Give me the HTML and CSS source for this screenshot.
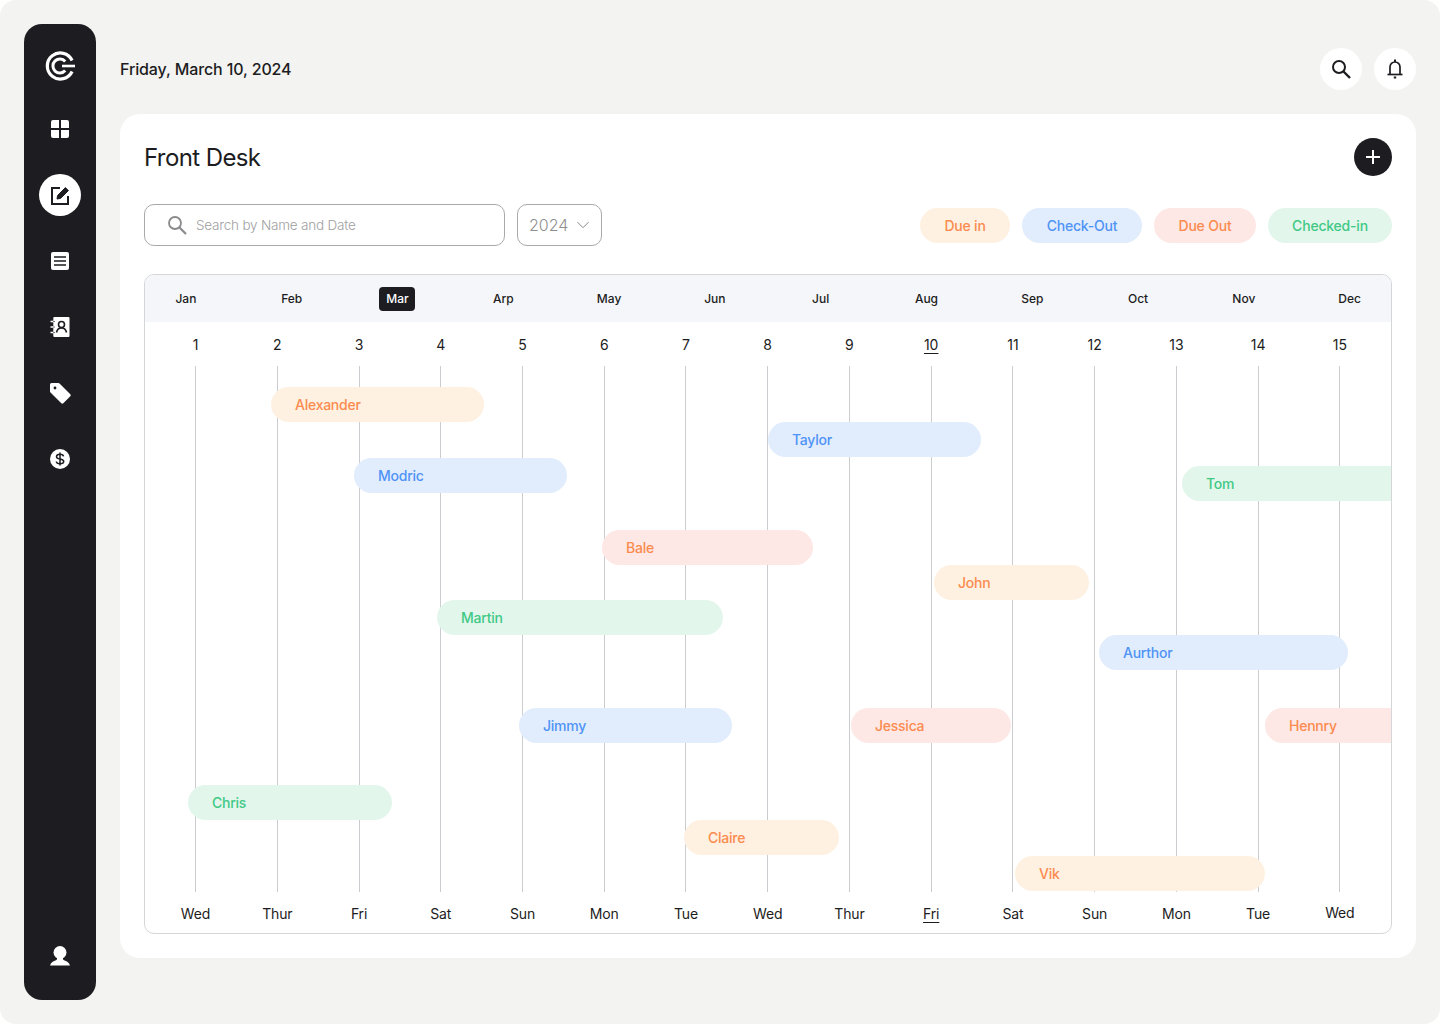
FILE: index.html
```html
<!DOCTYPE html>
<html lang="en">

<head>
  <meta charset="UTF-8" />
  <title>Front Desk</title>
  <link rel="stylesheet" href="styles.css">
</head>

<body>
  <div class="shell">
    <div class="sidebar">
      <svg class="logo" width="30" height="30" viewBox="0 0 30 30" fill="none" stroke="#fff" stroke-width="3.2">
        <path d="M27.100 9.500A13 13 0 1 0 27.100 20.500" />
        <path d="M20.200 10.400A7 7 0 1 0 20.200 19.600" stroke-width="3" />
        <path d="M17 15H30" stroke-width="2.600" />
      </svg>
      <div class="nav-item">
        <svg width="18" height="18" viewBox="0 0 18 18" fill="#fff">
          <path d="M2 0h6v8H0V2a2 2 0 0 1 2-2zM10 0h6a2 2 0 0 1 2 2v6h-8zM0 10h8v8H2a2 2 0 0 1-2-2zM10 10h8v6a2 2 0 0 1-2 2h-6z" />
        </svg>
      </div>
      <div class="nav-item active">
        <svg width="20" height="20" viewBox="0 0 20 20" fill="none" stroke="#1c1c21" stroke-width="2">
          <path d="M10 3H2v16h16v-8" />
          <path d="M7 14l.6-3.6L15.400 2.600l3 3-7.800 7.800z" fill="#1c1c21" stroke-width="1" />
        </svg>
      </div>
      <div class="nav-item">
        <svg width="18" height="18" viewBox="0 0 18 18">
          <rect width="18" height="18" rx="2" fill="#fff" />
          <path d="M3 5h12M3 9h12M3 13h12" stroke="#1c1c21" stroke-width="1.600" />
        </svg>
      </div>
      <div class="nav-item">
        <svg width="20" height="20" viewBox="0 0 20 20">
          <rect x="3.300" y="0" width="16.200" height="20" rx="1" fill="#fff" />
          <path d="M.5 4.500h4M.5 10h4M.5 15.500h4" stroke="#fff" stroke-width="1.600" />
          <path d="M3.300 4.500h1.500M3.300 10h1.500M3.300 15.500h1.500" stroke="#1c1c21" stroke-width="0.800" />
          <circle cx="11.500" cy="7.500" r="3" fill="none" stroke="#1c1c21" stroke-width="1.600" />
          <path d="M6.500 15.500c.5-3 2.500-4.500 5-4.500s4.500 1.500 5 4.500" fill="none" stroke="#1c1c21" stroke-width="1.600" />
        </svg>
      </div>
      <div class="nav-item">
        <svg width="21" height="21" viewBox="0 0 21 21">
          <path d="M1.500 0h7a1.500 1.500 0 0 1 1 .5l10.800 10.800a1.500 1.500 0 0 1 0 2l-7 7a1.500 1.500 0 0 1-2 0L.5 9.500a1.500 1.500 0 0 1-.5-1V1.500A1.500 1.500 0 0 1 1.500 0z" fill="#fff" />
          <circle cx="5" cy="5" r="1.400" fill="#1c1c21" />
        </svg>
      </div>
      <div class="nav-item">
        <svg width="20" height="20" viewBox="0 0 20 20" fill="none">
          <circle cx="10" cy="10" r="10" fill="#fff" />
          <path d="M13.500 7.300C13.300 6 12 5.300 10 5.300c-2.200 0-3.500 1-3.500 2.400 0 3.300 7.200 1.300 7.200 4.700 0 1.400-1.500 2.300-3.700 2.300-2.100 0-3.500-.8-3.700-2.200M10 3.500v13" stroke="#1c1c21" stroke-width="1.500" />
        </svg>
      </div>
      <div class="nav-user">
        <svg width="20" height="20" viewBox="0 0 20 20" fill="#fff">
          <circle cx="10" cy="6.500" r="6.500" />
          <path d="M0 19.500c.8-3 3.500-4.300 6-5.200 1.200-.5 1.200-2 .8-3.300h6.400c-.4 1.300-.4 2.800.8 3.300 2.500.9 5.200 2.200 6 5.200z" />
        </svg>
      </div>
    </div>

    <div class="main">
      <div class="topbar">
        <div class="date">Friday, March 10, 2024</div>
        <div class="top-actions">
          <div class="round-btn">
            <svg width="20" height="20" viewBox="0 0 20 20" fill="none" stroke="#1c1c21" stroke-width="2">
              <circle cx="8" cy="8" r="6" />
              <path d="M12.500 12.500L19 19" stroke-width="2.400" />
            </svg>
          </div>
          <div class="round-btn">
            <svg width="16" height="20" viewBox="0 0 16 20" fill="none" stroke="#1c1c21" stroke-width="1.700">
              <path d="M3 15V8a5 5 0 0 1 10 0v7" />
              <path d="M.5 15.500h15" />
              <path d="M8 0.500v2.500M6.800 18.500h2.400" stroke-width="2" />
            </svg>
          </div>
        </div>
      </div>

      <div class="card">
        <div class="card-head">
          <h1>Front Desk</h1>
          <div class="add-btn">
            <svg width="16" height="16" viewBox="0 0 16 16" stroke="#fff" stroke-width="2">
              <path d="M8 1v14M1 8h14" />
            </svg>
          </div>
        </div>

        <div class="controls">
          <div class="search">
            <svg width="20" height="20" viewBox="0 0 20 20" fill="none" stroke="#8a8a8c" stroke-width="1.800">
              <circle cx="8" cy="8" r="6" />
              <path d="M12.500 12.500L19 19" stroke-width="2.200" />
            </svg>
            <span>Search by Name and Date</span>
          </div>
          <div class="year">
            <span>2024</span>
            <svg width="14" height="8" viewBox="0 0 14 8" fill="none" stroke="#8a8a8c" stroke-width="1">
              <path d="M1.500 1.200l5.500 5.500 5.500-5.500" />
            </svg>
          </div>
          <div class="legend">
            <div class="pill orange">Due in</div>
            <div class="pill blue">Check-Out</div>
            <div class="pill pink">Due Out</div>
            <div class="pill green">Checked-in</div>
          </div>
        </div>

        <div class="board">
          <div class="months">
            <div>Jan</div>
            <div>Feb</div>
            <div><span class="current">Mar</span></div>
            <div>Arp</div>
            <div>May</div>
            <div>Jun</div>
            <div>Jul</div>
            <div>Aug</div>
            <div>Sep</div>
            <div>Oct</div>
            <div>Nov</div>
            <div>Dec</div>
          </div>

          <div class="days">
            <div>1</div>
            <div>2</div>
            <div>3</div>
            <div>4</div>
            <div>5</div>
            <div>6</div>
            <div>7</div>
            <div>8</div>
            <div>9</div>
            <div class="today">10</div>
            <div>11</div>
            <div>12</div>
            <div>13</div>
            <div>14</div>
            <div>15</div>
          </div>

          <div class="timeline">
            <div class="lines">
              <i></i><i></i><i></i><i></i><i></i>
              <i></i><i></i><i></i><i></i><i></i>
              <i></i><i></i><i></i><i></i><i></i>
            </div>
            <!-- bookings sit on the timeline at their dates -->
            <div class="bar orange" style="left:126px;top:21px;width:213px">Alexander</div>
            <div class="bar blue" style="left:623px;top:56px;width:213px">Taylor</div>
            <div class="bar blue" style="left:209px;top:92px;width:213px">Modric</div>
            <div class="bar green" style="left:1037px;top:100px;width:240px">Tom</div>
            <div class="bar pink" style="left:457px;top:164px;width:211px">Bale</div>
            <div class="bar orange" style="left:789px;top:199px;width:155px">John</div>
            <div class="bar green" style="left:292px;top:234px;width:286px">Martin</div>
            <div class="bar blue" style="left:954px;top:269px;width:249px">Aurthor</div>
            <div class="bar blue" style="left:374px;top:342px;width:213px">Jimmy</div>
            <div class="bar pink" style="left:706px;top:342px;width:160px">Jessica</div>
            <div class="bar pink" style="left:1120px;top:342px;width:160px">Hennry</div>
            <div class="bar green" style="left:43px;top:419px;width:204px">Chris</div>
            <div class="bar orange" style="left:539px;top:454px;width:155px">Claire</div>
            <div class="bar orange" style="left:870px;top:490px;width:250px">Vik</div>
          </div>

          <div class="weekdays">
            <div>Wed</div>
            <div>Thur</div>
            <div>Fri</div>
            <div>Sat</div>
            <div>Sun</div>
            <div>Mon</div>
            <div>Tue</div>
            <div>Wed</div>
            <div>Thur</div>
            <div class="today">Fri</div>
            <div>Sat</div>
            <div>Sun</div>
            <div>Mon</div>
            <div>Tue</div>
            <div class="last">Wed</div>
          </div>
        </div>
      </div>
    </div>
  </div>
</body>

</html>
```

FILE: styles.css
```css
* {
  box-sizing: border-box;
  font-family: 'Inter', sans-serif;
}

html {
  background-color: #fff;
}

body {
  margin: 0;
  color: #1c1c21;
}

.shell {
  display: flex;
  gap: 24px;
  height: 1024px;
  padding: 24px;
  background-color: #f3f3f1;
  border-radius: 16px;
}

/* sidebar */
.sidebar {
  display: flex;
  flex-direction: column;
  align-items: center;
  flex: none;
  width: 72px;
  height: 976px;
  padding: 27px 0 34px;
  background-color: #1c1c21;
  border-radius: 18px;
}

.logo {
  margin-bottom: 27px;
}

.nav-item {
  display: flex;
  align-items: center;
  justify-content: center;
  width: 42px;
  height: 42px;
  margin-bottom: 24px;
  border-radius: 50%;
}

.nav-item.active {
  background-color: #fff;
}

.nav-user {
  display: flex;
  margin-top: auto;
}

/* top bar */
.main {
  flex: 1;
  min-width: 0;
}

.topbar {
  display: flex;
  align-items: center;
  justify-content: space-between;
  height: 42px;
  margin-top: 24px;
  margin-bottom: 24px;
}

.date {
  font-size: 16px;
  font-weight: 500;
  letter-spacing: -0.12px;
}

.top-actions {
  display: flex;
  gap: 12px;
}

.round-btn {
  display: flex;
  align-items: center;
  justify-content: center;
  width: 42px;
  height: 42px;
  background-color: #fff;
  border-radius: 50%;
}

/* card */
.card {
  height: 844px;
  padding: 24px;
  background-color: #fff;
  border-radius: 20px;
}

.card-head {
  display: flex;
  align-items: center;
  justify-content: space-between;
  height: 38px;
  margin-bottom: 28px;
}

h1 {
  margin: 0;
  font-size: 24px;
  font-weight: 400;
  letter-spacing: -0.6px;
}

.add-btn {
  display: flex;
  align-items: center;
  justify-content: center;
  width: 38px;
  height: 38px;
  background-color: #1c1c21;
  border-radius: 50%;
}

.controls {
  display: flex;
  align-items: center;
  gap: 12px;
  height: 42px;
  margin-bottom: 28px;
}

.search {
  display: flex;
  align-items: center;
  gap: 9px;
  width: 361px;
  height: 42px;
  padding-left: 22px;
  border: 1px solid #a9a9ab;
  border-radius: 10px;
  color: #a0a0a2;
  font-size: 13.500px;
  font-weight: 300;
  letter-spacing: -0.2px;
}

.year {
  display: flex;
  align-items: center;
  justify-content: space-between;
  width: 85px;
  height: 42px;
  padding: 0 11px;
  border: 1px solid #a9a9ab;
  border-radius: 10px;
  color: #8f8f91;
  font-size: 16px;
  font-weight: 300;
}

.legend {
  display: grid;
  grid-template-columns: 90px 120px 102px 124px;
  gap: 12px;
  margin-left: auto;
}

.pill {
  height: 35px;
  border-radius: 18px;
  font-size: 14px;
  font-weight: 500;
  letter-spacing: -0.2px;
  line-height: 35px;
  text-align: center;
}

.orange {
  background-color: #fef1e2;
  color: #fb8b4e;
}

.blue {
  background-color: #e1edfc;
  color: #4f93f6;
}

.pink {
  background-color: #fde8e6;
  color: #fb8b4e;
}

.green {
  background-color: #e3f6ec;
  color: #40c985;
}

/* board */
.board {
  height: 660px;
  overflow: hidden;
  border: 1px solid #d5d6d8;
  border-radius: 10px;
}

.months {
  display: grid;
  grid-template-columns: repeat(12, 105.800px);
  align-items: center;
  height: 47px;
  margin-left: -12px;
  background-color: #f4f6fa;
  font-size: 12px;
  font-weight: 500;
  text-align: center;
}

.current {
  display: inline-block;
  width: 36px;
  height: 24px;
  background-color: #1c1c21;
  border-radius: 4px;
  color: #fff;
  line-height: 24px;
}

.days,
.weekdays,
.lines {
  display: grid;
  grid-template-columns: repeat(15, 1fr);
  padding: 0 10.300px 0 9.700px;
}

.days,
.weekdays {
  align-items: center;
  font-size: 14px;
  text-align: center;
}

.days {
  height: 44px;
}

.weekdays {
  height: 41px;
  padding-top: 2px;
  letter-spacing: -0.15px;
}

.weekdays .last {
  padding-bottom: 2px;
}

.today {
  text-decoration: underline;
  text-decoration-thickness: 1px;
  text-underline-offset: 3px;
}

.timeline {
  position: relative;
  height: 526px;
}

.lines {
  height: 100%;
}

.lines i {
  width: 1px;
  margin: 0 auto;
  background-color: #cbccd0;
}

.bar {
  position: absolute;
  height: 35px;
  padding-left: 24px;
  border-radius: 18px;
  font-size: 14px;
  font-weight: 500;
  letter-spacing: -0.25px;
  line-height: 35px;
}
```
